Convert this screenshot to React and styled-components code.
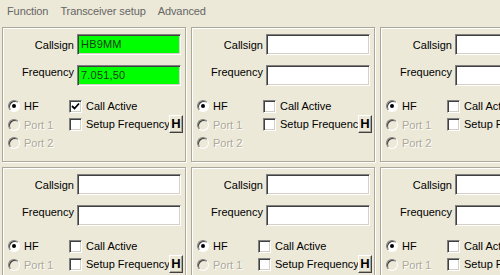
import React from 'react';
import styled, { createGlobalStyle } from 'styled-components';

const GlobalStyle = createGlobalStyle`
  html, body {
    margin: 0;
    padding: 0;
    background: #ece9d8;
    overflow: hidden;
  }
  body {
    font-family: "Liberation Sans", Arial, sans-serif;
    font-size: 11px;
    color: #000;
  }
`;

// 窗口
const Window = styled.div`
  width: 500px;
  height: 275px;
  background: #ece9d8;
  overflow: hidden;
`;

// 菜单栏
const MenuBar = styled.div`
  display: flex;
  height: 21px;
  align-items: center;
  padding-left: 1px;
`;

const MenuItem = styled.span`
  padding: 0 6px;
  color: #666;
  font-size: 11px;
  letter-spacing: -0.1px;
`;

// 面板网格
const PanelGrid = styled.div`
  display: grid;
  grid-template-columns: repeat(3, 184px);
  grid-auto-rows: 135px;
  column-gap: 5px;
  row-gap: 5px;
  padding: 6px 0 0 2px;
  width: 700px;
`;

const Panel = styled.div`
  box-sizing: border-box;
  border: 1px solid #aca899;
  box-shadow: inset 1px 1px 0 #fff, 1px 1px 0 #fff;
  padding: 6px 2px 0 0;
`;

const FieldGrid = styled.div`
  display: grid;
  grid-template-columns: 71px 104px;
  column-gap: 3px;
  row-gap: 10px;
`;

const FieldLabel = styled.label`
  text-align: right;
  align-self: ${(p) => (p.$raised ? 'start' : 'center')};
  padding-top: ${(p) => (p.$raised ? '1px' : '0')};
  white-space: nowrap;
`;

const TextBox = styled.div`
  box-sizing: border-box;
  height: 21px;
  background: ${(p) => (p.$active ? '#00ff00' : '#fff')};
  border-style: solid;
  border-width: 1px;
  border-color: #808080 #fff #fff #808080;
  box-shadow: inset 1px 1px 0 #404040, inset -1px -1px 0 #d4d0c8;
  padding: 3px 3px 0;
  color: #1a3a1a;
  font-size: 11px;
  letter-spacing: 0.2px;
`;

const Lower = styled.div`
  display: flex;
  margin-top: 11px;
`;

const RadioCol = styled.div`
  display: flex;
  flex-direction: column;
  width: ${(p) => 61 + (p.$shift || 0)}px;
  padding-left: 5px;
  flex-shrink: 0;
`;

const RadioRow = styled.div`
  display: flex;
  align-items: center;
  gap: 4px;
  height: 18.5px;
  color: ${(p) => (p.$disabled ? '#aca899' : '#000')};
  text-shadow: ${(p) => (p.$disabled ? '1px 1px 0 #fff' : 'none')};
`;

const RadioDot = styled.span`
  position: relative;
  box-sizing: border-box;
  width: 12px;
  height: 12px;
  border-radius: 50%;
  border: 1px solid;
  border-color: #808080 #fff #fff #808080;
  box-shadow: inset 1px 1px 0 #404040;
  background: ${(p) => (p.$disabled ? '#ece9d8' : '#fff')};
  flex-shrink: 0;

  &::after {
    content: '';
    display: ${(p) => (p.$checked ? 'block' : 'none')};
    position: absolute;
    left: 3px;
    top: 3px;
    width: 4px;
    height: 4px;
    border-radius: 50%;
    background: #000;
  }
`;

const CheckCol = styled.div`
  display: flex;
  flex-direction: column;
  flex: 1;
  min-width: 0;
`;

const CheckRow = styled.div`
  display: flex;
  align-items: center;
  height: 18px;
  min-width: 0;
`;

const CheckBox = styled.span`
  box-sizing: border-box;
  width: 13px;
  height: 13px;
  border: 1px solid;
  border-color: #808080 #fff #fff #808080;
  box-shadow: inset 1px 1px 0 #404040, inset -1px -1px 0 #d4d0c8;
  background: #fff;
  flex-shrink: 0;
  display: flex;
  align-items: center;
  justify-content: center;
`;

const CheckText = styled.span`
  margin-left: 4px;
  white-space: nowrap;
  overflow: hidden;
  flex: 1;
  min-width: 0;
`;

const HButton = styled.button`
  box-sizing: border-box;
  width: 14px;
  height: 18px;
  padding: 0;
  margin-top: -1px;
  flex-shrink: 0;
  background: #ece9d8;
  border: 1px solid;
  border-color: #fff #404040 #404040 #fff;
  box-shadow: inset -1px -1px 0 #aca899;
  font-family: "Liberation Sans", Arial, sans-serif;
  font-weight: bold;
  font-size: 13px;
  line-height: 15px;
  color: #000;
`;

const Tick = () => (
  <svg width="9" height="9" viewBox="0 0 9 9">
    <path d="M1 4 L3.5 6.5 L8 1.5" fill="none" stroke="#000" strokeWidth="1.8" />
  </svg>
);

const panels = [
  { key: 1, callsign: 'HB9MM', frequency: '7.051,50', active: true, callActive: true, ports: 3 },
  { key: 2, shift: 5, ports: 3 },
  { key: 3, ports: 3 },
  { key: 4, ports: 2 },
  { key: 5, ports: 2 },
  { key: 6, ports: 2 },
];

const StationPanel = ({ p }) => (
  <Panel>
    <FieldGrid>
      <FieldLabel>Callsign</FieldLabel>
      <TextBox $active={p.active}>{p.callsign}</TextBox>
      <FieldLabel $raised>Frequency</FieldLabel>
      <TextBox $active={p.active}>{p.frequency}</TextBox>
    </FieldGrid>
    <Lower>
      <RadioCol $shift={p.shift}>
        <RadioRow>
          <RadioDot $checked />
          HF
        </RadioRow>
        <RadioRow $disabled>
          <RadioDot $disabled />
          Port 1
        </RadioRow>
        {p.ports > 2 && (
          <RadioRow $disabled>
            <RadioDot $disabled />
            Port 2
          </RadioRow>
        )}
      </RadioCol>
      <CheckCol>
        <CheckRow>
          <CheckBox>{p.callActive && <Tick />}</CheckBox>
          <CheckText>Call Active</CheckText>
        </CheckRow>
        <CheckRow>
          <CheckBox />
          <CheckText>Setup Frequency</CheckText>
          <HButton>H</HButton>
        </CheckRow>
      </CheckCol>
    </Lower>
  </Panel>
);

const App = () => (
  <Window>
    <GlobalStyle />
    <MenuBar>
      <MenuItem>Function</MenuItem>
      <MenuItem>Transceiver setup</MenuItem>
      <MenuItem>Advanced</MenuItem>
    </MenuBar>
    <PanelGrid>
      {panels.map((p) => (
        <StationPanel key={p.key} p={p} />
      ))}
    </PanelGrid>
  </Window>
);

export default App;
